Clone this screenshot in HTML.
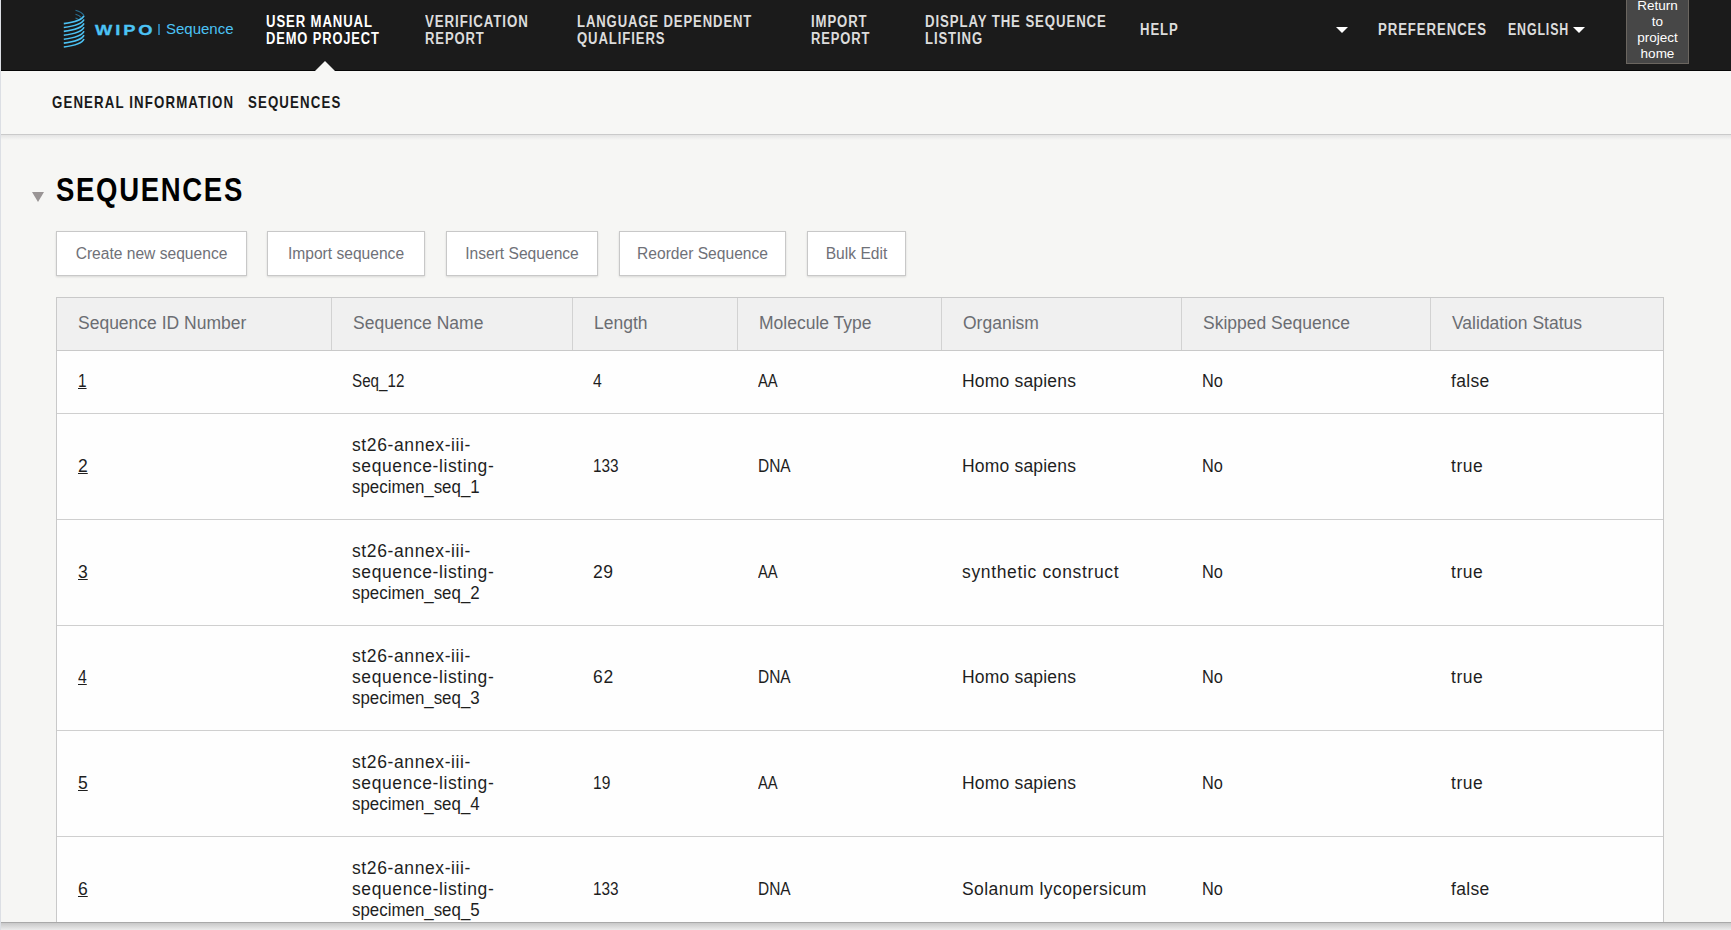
<!DOCTYPE html>
<html>
<head>
<meta charset="utf-8">
<style>
html,body{margin:0;padding:0;}
body{width:1731px;height:930px;overflow:hidden;position:relative;background:#f6f6f4;font-family:"Liberation Sans",sans-serif;}
.abs{position:absolute;white-space:nowrap;}
#lb{position:absolute;left:0;top:0;width:1px;height:930px;background:#dcdfe4;z-index:50;}
#nav{position:absolute;left:1px;top:0;width:1730px;height:70px;background:#1b1b1b;border-bottom:1px solid #060606;}
#wipo{left:95px;top:21px;font-weight:bold;font-size:15px;line-height:18px;color:#4cc3f5;letter-spacing:2.4px;transform:scaleX(1.22);-webkit-text-stroke:0.3px #4cc3f5;transform-origin:0 0;}
#wsep{left:158px;top:24px;width:1.6px;height:11px;background:#2a7aa8;}
#wseq{left:166px;top:20px;font-size:15px;line-height:18px;color:#4cc3f5;}
.ni{position:absolute;font-weight:bold;font-size:16px;line-height:17px;color:#dcdcdc;letter-spacing:1.1px;transform-origin:0 0;white-space:nowrap;}
.ni.act{color:#fff;}
.tri{position:absolute;width:0;height:0;border-left:6px solid transparent;border-right:6px solid transparent;border-top:6px solid #fff;}
#ret{position:absolute;left:1626px;top:-5px;width:61px;border:1px solid #6b6660;background:#474747;color:#fff;font-size:13.5px;line-height:16px;text-align:center;padding:2px 0 1px;}
#sub{position:absolute;left:1px;top:71px;width:1730px;height:63px;background:#f7f7f5;border-bottom:1px solid #cacaca;}
#shadow{position:absolute;left:1px;top:135px;width:1730px;height:5px;background:linear-gradient(#e4e4e4,#f6f6f4);}
.si{position:absolute;font-weight:bold;font-size:17px;line-height:20px;color:#1a1a1a;transform-origin:0 0;white-space:nowrap;letter-spacing:1.44px;}
#h1{position:absolute;left:56px;top:171px;font-weight:bold;font-size:34px;line-height:36px;color:#000;letter-spacing:2.06px;transform-origin:0 0;white-space:nowrap;}
#htri{position:absolute;left:32px;top:192px;width:0;height:0;border-left:6px solid transparent;border-right:6px solid transparent;border-top:10px solid #9a9595;}
.btn{position:absolute;top:231px;height:43px;background:#fff;border:1px solid #c8c8c8;box-shadow:0 1px 2px rgba(0,0,0,0.12);color:#6f7178;font-size:15.6px;line-height:44px;text-align:center;white-space:nowrap;}
#tbl{position:absolute;left:56px;top:297px;width:1606px;height:700px;border:1px solid #c9c9c9;background:#fefefe;}
#thead{position:absolute;left:57px;top:298px;width:1606px;height:52px;background:#f0f0f0;border-bottom:1px solid #c9c9c9;}
.vl{position:absolute;top:298px;width:1px;height:52px;background:#d2d2d2;}
.hl{position:absolute;left:57px;width:1606px;height:1px;background:#cfcfcf;}
.th{position:absolute;font-size:17.5px;line-height:20px;color:#6b6d72;white-space:nowrap;}
.td{position:absolute;font-size:17.5px;line-height:21px;color:#1e1e1e;white-space:nowrap;transform-origin:0 0;}
#bot{position:absolute;left:1px;top:922px;width:1730px;height:8px;background:linear-gradient(#c8c8c8,#ebebeb);border-top:1px solid #a9a9a9;box-sizing:border-box;z-index:20;}

</style>
</head>
<body>
<div id="lb"></div>
<div id="nav"></div>
<svg class="abs" style="left:60px;top:6px" width="30" height="46" viewBox="60 6 30 46"><path d="M63.8,23.60 C72,22.60 82,20.10 84,15.60" stroke="#4cc3f5" stroke-width="1.6" fill="none"/><path d="M63.8,27.50 C72,26.50 82,24.00 84,19.50" stroke="#4cc3f5" stroke-width="1.6" fill="none"/><path d="M63.8,31.40 C72,30.40 82,27.90 84,23.40" stroke="#4cc3f5" stroke-width="1.6" fill="none"/><path d="M63.8,35.30 C72,34.30 82,31.80 84,27.30" stroke="#4cc3f5" stroke-width="1.6" fill="none"/><path d="M63.8,39.20 C72,38.20 82,35.70 84,31.20" stroke="#4cc3f5" stroke-width="1.6" fill="none"/><path d="M63.8,43.10 C72,42.10 82,39.60 84,35.10" stroke="#4cc3f5" stroke-width="1.6" fill="none"/><path d="M63.8,47.00 C72,46.00 82,43.50 84,39.00" stroke="#4cc3f5" stroke-width="1.6" fill="none"/><path d="M75.5,10.3 C79,11.2 82.5,13 84,15.5" stroke="#2a6f93" stroke-width="1.1" fill="none"/><path d="M75.5,14.2 C78,15 80,16 81,17.3" stroke="#2a6f93" stroke-width="1.1" fill="none"/><path d="M75.5,18 C76.5,18.4 77.5,18.8 78,19.3" stroke="#2a6f93" stroke-width="1.1" fill="none"/></svg>
<div class="abs" id="wipo">WIPO</div>
<div class="abs" id="wsep"></div>
<div class="abs" id="wseq">Sequence</div>
<div class="ni act" style="left:266px;top:13px;transform:scaleX(0.82)">USER MANUAL</div>
<div class="ni act" style="left:266px;top:30px;transform:scaleX(0.806)">DEMO PROJECT</div>
<div class="ni" style="left:425px;top:13px;transform:scaleX(0.83)">VERIFICATION</div>
<div class="ni" style="left:425px;top:30px;transform:scaleX(0.815)">REPORT</div>
<div class="ni" style="left:577px;top:13px;transform:scaleX(0.817)">LANGUAGE DEPENDENT</div>
<div class="ni" style="left:577px;top:30px;transform:scaleX(0.82)">QUALIFIERS</div>
<div class="ni" style="left:811px;top:13px;transform:scaleX(0.82)">IMPORT</div>
<div class="ni" style="left:811px;top:30px;transform:scaleX(0.81)">REPORT</div>
<div class="ni" style="left:925px;top:13px;transform:scaleX(0.825)">DISPLAY THE SEQUENCE</div>
<div class="ni" style="left:925px;top:30px;transform:scaleX(0.82)">LISTING</div>
<div class="ni" style="left:1140px;top:21px;transform:scaleX(0.82)">HELP</div>
<div class="tri" style="left:1336px;top:27px"></div>
<div class="ni" style="left:1378px;top:21px;transform:scaleX(0.825)">PREFERENCES</div>
<div class="ni" style="left:1508px;top:21px;transform:scaleX(0.775)">ENGLISH</div>
<div class="tri" style="left:1573px;top:27px"></div>
<div class="abs" style="left:315px;top:61px;width:0;height:0;border-left:10px solid transparent;border-right:10px solid transparent;border-bottom:10px solid #f7f7f5;z-index:5"></div>
<div id="ret">Return<br>to<br>project<br>home</div>
<div id="sub"></div><div id="shadow"></div>
<div class="si" style="left:52px;top:93px;transform:scaleX(0.78)">GENERAL INFORMATION</div>
<div class="si" style="left:248px;top:93px;transform:scaleX(0.78)">SEQUENCES</div>
<div id="htri"></div>
<div id="h1" style="transform:scaleX(0.81)">SEQUENCES</div>
<div class="btn" style="left:56px;width:189px">Create new sequence</div>
<div class="btn" style="left:267px;width:156px">Import sequence</div>
<div class="btn" style="left:446px;width:150px">Insert Sequence</div>
<div class="btn" style="left:619px;width:165px">Reorder Sequence</div>
<div class="btn" style="left:807px;width:97px">Bulk Edit</div>
<div id="tbl"></div>
<div id="thead"></div>
<div class="vl" style="left:331px"></div>
<div class="vl" style="left:572px"></div>
<div class="vl" style="left:737px"></div>
<div class="vl" style="left:941px"></div>
<div class="vl" style="left:1181px"></div>
<div class="vl" style="left:1430px"></div>
<div class="hl" style="top:413px"></div>
<div class="hl" style="top:519px"></div>
<div class="hl" style="top:625px"></div>
<div class="hl" style="top:730px"></div>
<div class="hl" style="top:836px"></div>
<div class="th" style="left:78px;top:313px">Sequence ID Number</div>
<div class="th" style="left:353px;top:313px">Sequence Name</div>
<div class="th" style="left:594px;top:313px">Length</div>
<div class="th" style="left:759px;top:313px">Molecule Type</div>
<div class="th" style="left:963px;top:313px">Organism</div>
<div class="th" style="left:1203px;top:313px">Skipped Sequence</div>
<div class="th" style="left:1452px;top:313px">Validation Status</div>
<div class="td" style="left:78px;top:370.9px;transform:scaleX(0.88);"><u>1</u></div>
<div class="td" style="left:352px;top:370.9px;transform:scaleX(0.868);">Seq_12</div>
<div class="td" style="left:593px;top:370.9px;transform:scaleX(0.9);">4</div>
<div class="td" style="left:758px;top:370.9px;transform:scaleX(0.846);">AA</div>
<div class="td" style="left:962px;top:370.9px;letter-spacing:0.19px;">Homo sapiens</div>
<div class="td" style="left:1202px;top:370.9px;transform:scaleX(0.933);">No</div>
<div class="td" style="left:1451px;top:370.9px;letter-spacing:0.3px;">false</div>
<div class="td" style="left:78px;top:456.4px;"><u>2</u></div>
<div class="td" style="left:352px;top:435.4px;letter-spacing:0.61px;">st26-annex-iii-</div>
<div class="td" style="left:352px;top:456.4px;letter-spacing:0.59px;">sequence-listing-</div>
<div class="td" style="left:352px;top:477.4px;transform:scaleX(0.965);">specimen_seq_1</div>
<div class="td" style="left:593px;top:456.4px;transform:scaleX(0.875);">133</div>
<div class="td" style="left:758px;top:456.4px;transform:scaleX(0.883);">DNA</div>
<div class="td" style="left:962px;top:456.4px;letter-spacing:0.19px;">Homo sapiens</div>
<div class="td" style="left:1202px;top:456.4px;transform:scaleX(0.933);">No</div>
<div class="td" style="left:1451px;top:456.4px;letter-spacing:0.53px;">true</div>
<div class="td" style="left:78px;top:562.4px;"><u>3</u></div>
<div class="td" style="left:352px;top:541.4px;letter-spacing:0.61px;">st26-annex-iii-</div>
<div class="td" style="left:352px;top:562.4px;letter-spacing:0.59px;">sequence-listing-</div>
<div class="td" style="left:352px;top:583.4px;transform:scaleX(0.965);">specimen_seq_2</div>
<div class="td" style="left:593px;top:562.4px;letter-spacing:0.6px;">29</div>
<div class="td" style="left:758px;top:562.4px;transform:scaleX(0.846);">AA</div>
<div class="td" style="left:962px;top:562.4px;letter-spacing:0.65px;">synthetic construct</div>
<div class="td" style="left:1202px;top:562.4px;transform:scaleX(0.933);">No</div>
<div class="td" style="left:1451px;top:562.4px;letter-spacing:0.53px;">true</div>
<div class="td" style="left:78px;top:666.9px;transform:scaleX(0.9);"><u>4</u></div>
<div class="td" style="left:352px;top:645.9px;letter-spacing:0.61px;">st26-annex-iii-</div>
<div class="td" style="left:352px;top:666.9px;letter-spacing:0.59px;">sequence-listing-</div>
<div class="td" style="left:352px;top:687.9px;transform:scaleX(0.965);">specimen_seq_3</div>
<div class="td" style="left:593px;top:666.9px;letter-spacing:0.8px;">62</div>
<div class="td" style="left:758px;top:666.9px;transform:scaleX(0.883);">DNA</div>
<div class="td" style="left:962px;top:666.9px;letter-spacing:0.19px;">Homo sapiens</div>
<div class="td" style="left:1202px;top:666.9px;transform:scaleX(0.933);">No</div>
<div class="td" style="left:1451px;top:666.9px;letter-spacing:0.53px;">true</div>
<div class="td" style="left:78px;top:773.4px;"><u>5</u></div>
<div class="td" style="left:352px;top:752.4px;letter-spacing:0.61px;">st26-annex-iii-</div>
<div class="td" style="left:352px;top:773.4px;letter-spacing:0.59px;">sequence-listing-</div>
<div class="td" style="left:352px;top:794.4px;transform:scaleX(0.965);">specimen_seq_4</div>
<div class="td" style="left:593px;top:773.4px;transform:scaleX(0.89);">19</div>
<div class="td" style="left:758px;top:773.4px;transform:scaleX(0.846);">AA</div>
<div class="td" style="left:962px;top:773.4px;letter-spacing:0.19px;">Homo sapiens</div>
<div class="td" style="left:1202px;top:773.4px;transform:scaleX(0.933);">No</div>
<div class="td" style="left:1451px;top:773.4px;letter-spacing:0.53px;">true</div>
<div class="td" style="left:78px;top:879.4px;"><u>6</u></div>
<div class="td" style="left:352px;top:858.4px;letter-spacing:0.61px;">st26-annex-iii-</div>
<div class="td" style="left:352px;top:879.4px;letter-spacing:0.59px;">sequence-listing-</div>
<div class="td" style="left:352px;top:900.4px;transform:scaleX(0.965);">specimen_seq_5</div>
<div class="td" style="left:593px;top:879.4px;transform:scaleX(0.875);">133</div>
<div class="td" style="left:758px;top:879.4px;transform:scaleX(0.883);">DNA</div>
<div class="td" style="left:962px;top:879.4px;letter-spacing:0.44px;">Solanum lycopersicum</div>
<div class="td" style="left:1202px;top:879.4px;transform:scaleX(0.933);">No</div>
<div class="td" style="left:1451px;top:879.4px;letter-spacing:0.3px;">false</div>
<div id="bot"></div>
</body>
</html>
